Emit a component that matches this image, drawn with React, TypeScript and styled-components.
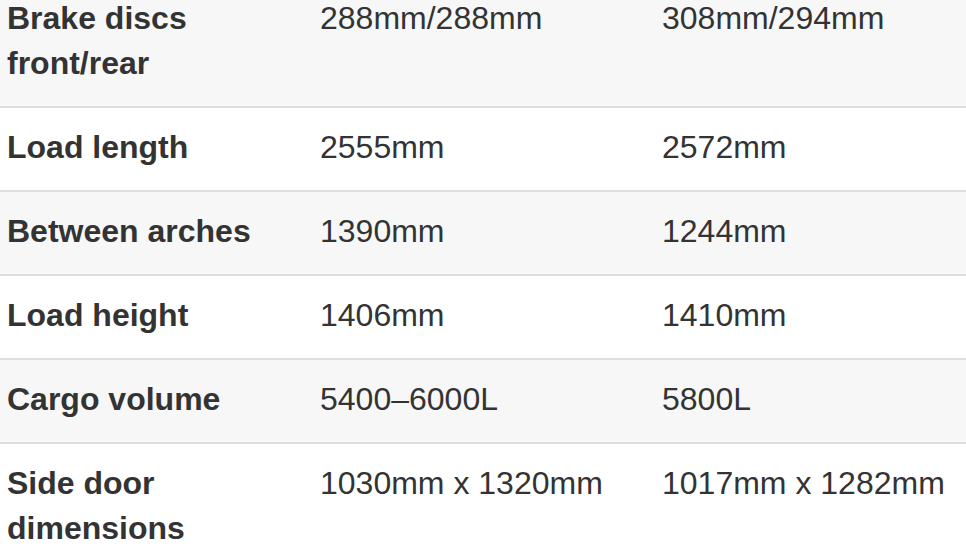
import React from 'react';
import styled, { createGlobalStyle } from 'styled-components';

const rows: [string, string, string][] = [
	['Brake discs front/rear', '288mm/288mm', '308mm/294mm'],
	['Load length', '2555mm', '2572mm'],
	['Between arches', '1390mm', '1244mm'],
	['Load height', '1406mm', '1410mm'],
	['Cargo volume', '5400–6000L', '5800L'],
	['Side door dimensions', '1030mm x 1320mm', '1017mm x 1282mm'],
];

function App() {
	return (
		<>
			<GlobalStyle />
			<SpecTable>
				<colgroup>
					<col style={{ width: 314 }} />
					<col style={{ width: 342 }} />
					<col />
				</colgroup>
				<tbody>
					{rows.map(([label, first, second], i) => (
						<Row key={label} $shaded={i % 2 === 0}>
							<Label>{label}</Label>
							<Cell>{first}</Cell>
							<Cell>{second}</Cell>
						</Row>
					))}
				</tbody>
			</SpecTable>
		</>
	);
}

const GlobalStyle = createGlobalStyle`
	html, body {
		margin: 0;
		padding: 0;
		background: #ffffff;
		overflow: hidden;
	}
	body {
		font-family: 'Liberation Sans', Arial, sans-serif;
		color: #333333;
	}
`;

const SpecTable = styled('table')`
	width: 966px;
	margin-top: -21px;
	border-collapse: collapse;
	table-layout: fixed;
`;

const Row = styled('tr')<{ $shaded: boolean }>`
	background: ${(p) => (p.$shaded ? '#f7f7f7' : '#ffffff')};
	border-bottom: 2px solid #dedede;
`;

const Cell = styled('td')`
	padding: 17px 4px 20px 6px;
	vertical-align: top;
	font-size: 32px;
	line-height: 45px;
	font-weight: 400;
	color: #333333;
`;

const Label = styled(Cell)`
	padding-left: 7px;
	font-weight: 700;
`;

export default App;
